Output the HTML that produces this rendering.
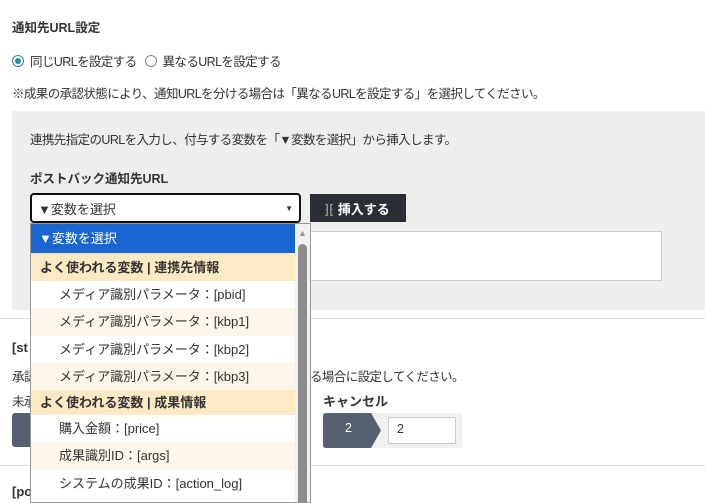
<!DOCTYPE html>
<html><head><meta charset="utf-8"><style>
*{box-sizing:border-box;margin:0;padding:0}
body{width:705px;height:496px;overflow:hidden;background:#fff;font-family:"Liberation Sans","Noto Sans CJK JP",sans-serif;font-size:12.5px;letter-spacing:-0.6px;color:#333;position:relative}
.a{position:absolute;white-space:nowrap}
.b{font-weight:bold}
.dd div{font-size:13px;letter-spacing:0}
</style></head><body>
<div class="a b" style="left:12px;top:17px;font-size:12.5px;letter-spacing:0">通知先URL設定</div>
<div class="a" style="left:12px;top:51px;display:flex;align-items:center">
<span style="width:12px;height:12px;border-radius:50%;border:1px solid #2a8a9a;display:inline-flex;align-items:center;justify-content:center;margin-right:6px"><span style="width:6px;height:6px;border-radius:50%;background:#2a8a9a"></span></span>同じURLを設定する
<span style="width:12px;height:12px;border-radius:50%;border:1px solid #888;display:inline-block;margin:0 6px 0 8px"></span>異なるURLを設定する</div>
<div class="a" style="left:12px;top:83px">※成果の承認状態により、通知URLを分ける場合は「異なるURLを設定する」を選択してください。</div>
<div class="a" style="left:12px;top:111px;width:693px;height:199px;background:#eee"></div>
<div class="a" style="left:30px;top:129px">連携先指定のURLを入力し、付与する変数を「▼変数を選択」から挿入します。</div>
<div class="a b" style="left:30px;top:168px;font-size:12.5px;letter-spacing:0">ポストバック通知先URL</div>
<div class="a" style="left:30px;top:193px;width:271px;height:30px;border:2px solid #111;border-radius:4px;background:#fff;padding:4px 6px;font-size:13px;letter-spacing:0">▼変数を選択<span style="position:absolute;right:6px;top:9px;font-size:8px">▼</span></div>
<div class="a b" style="left:310px;top:194px;width:96px;height:28px;background:#2b2e34;color:#fff;padding:5px 0 0 14px;font-size:13px;letter-spacing:0"><span style="color:#aaa;font-weight:normal">⁆⁅</span> 挿入する</div>
<div class="a" style="left:300px;top:231px;width:362px;height:50px;background:#fff;border:1px solid #ccc"></div>
<div class="a" style="left:0;top:318px;width:705px;border-top:1px solid #ddd"></div>
<div class="a b" style="left:12px;top:340px;font-size:13px;letter-spacing:0">[st</div>
<div class="a" style="left:12px;top:366px">承認</div>
<div class="a" style="left:310px;top:366px">る場合に設定してください。</div>
<div class="a" style="left:12px;top:391px">未承</div>
<div class="a" style="left:12px;top:413px;width:30px;height:34px;background:#576070;border-radius:3px"></div>
<div class="a b" style="left:323px;top:391px;font-size:13px;letter-spacing:0">キャンセル</div>
<div class="a" style="left:323px;top:413px;width:139px;height:35px;background:#f0f0f0;border-radius:3px"></div>
<svg class="a" style="left:323px;top:413px" width="60" height="35"><path d="M0 3Q0 0 3 0H48L58 17.5 48 35H3Q0 35 0 32Z" fill="#576070"/></svg>
<div class="a" style="left:345px;top:421px;color:#fff">2</div>
<div class="a" style="left:388px;top:417px;width:68px;height:27px;background:#fff;border:1px solid #ccc;padding:4px 8px">2</div>
<div class="a" style="left:0;top:465px;width:705px;border-top:1px solid #ddd"></div>
<div class="a b" style="left:12px;top:484px;font-size:13px;letter-spacing:0">[po</div>
<div class="a dd" style="left:30px;top:223px;width:281px;height:280px;background:#fff;border:1px solid #999;overflow:hidden">
<div style="height:29px;background:#1a66d1;color:#fff;padding:4px 8px">▼変数を選択</div>
<div class="b" style="height:28px;background:#fde9c4;padding:4px 9px">よく使われる変数 | 連携先情報</div>
<div style="height:27px;padding:3px 28px">メディア識別パラメータ：[pbid]</div>
<div style="height:28px;background:#fdf6ea;padding:3px 28px">メディア識別パラメータ：[kbp1]</div>
<div style="height:27px;padding:3px 28px">メディア識別パラメータ：[kbp2]</div>
<div style="height:27px;background:#fdf6ea;padding:3px 28px">メディア識別パラメータ：[kbp3]</div>
<div class="b" style="height:25px;background:#fde9c4;padding:2px 9px">よく使われる変数 | 成果情報</div>
<div style="height:27px;padding:3px 28px">購入金額：[price]</div>
<div style="height:28px;background:#fdf6ea;padding:3px 28px">成果識別ID：[args]</div>
<div style="height:27px;padding:3px 28px">システムの成果ID：[action_log]</div>
<div style="position:absolute;right:0;top:0;width:15px;height:280px;background:#f1f1f1"></div>
<div style="position:absolute;right:1px;top:4px;width:13px;font-size:9px;color:#999;text-align:center">▲</div>
<div style="position:absolute;right:3px;top:20px;width:9px;height:270px;background:#8c8c8c;border-radius:5px"></div>
</div>
</body></html>
